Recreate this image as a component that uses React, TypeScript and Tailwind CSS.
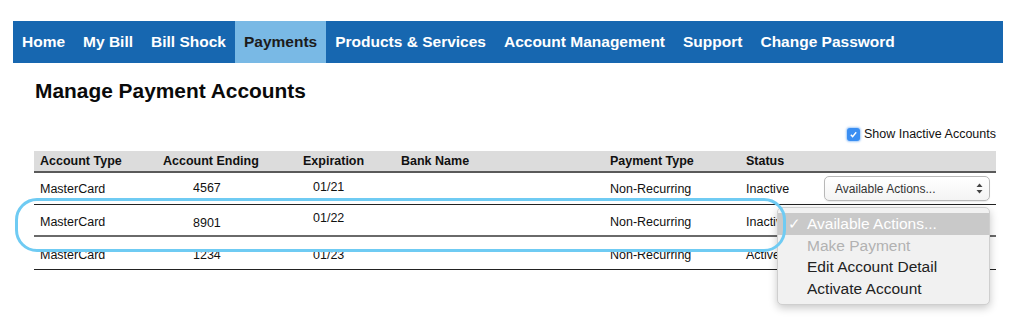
const nav = [
  "Home",
  "My Bill",
  "Bill Shock",
  "Payments",
  "Products & Services",
  "Account Management",
  "Support",
  "Change Password",
];

const cols = ["w-[123px]", "w-[140px]", "w-[98px]", "w-[209px]", "w-[136px]", "w-[78px]", "flex-1"];
const heads = ["Account Type", "Account Ending", "Expiration", "Bank Name", "Payment Type", "Status", ""];

const rows = [
  { type: "MasterCard", ending: "4567", exp: "01/21", pay: "Non-Recurring", status: "Inactive", select: true, row: "h-[32px] pt-[2px] border-b border-[#222]", endY: "-translate-y-[1px]", expY: "-translate-y-[2px]" },
  { type: "MasterCard", ending: "8901", exp: "01/22", pay: "Non-Recurring", status: "Inactive", select: false, row: "h-[32px] pt-[5px] border-b-2 border-[#6a6a6a]", endY: "translate-y-[1px]", expY: "-translate-y-[4px]" },
  { type: "MasterCard", ending: "1234", exp: "01/23", pay: "Non-Recurring", status: "Active", select: false, row: "h-[33px] pt-[4px] border-b border-[#222]", endY: "", expY: "" },
];

function SelectBox() {
  return (
    <div className="-mt-[2px] flex h-[25px] w-[166px] items-center justify-between rounded-[5px] border border-[#b8b8b8] bg-gradient-to-b from-white to-[#f4f4f4] pl-[10px] pr-[6px] shadow-[0_1px_1px_rgba(0,0,0,0.08)]">
      <span className="text-[12px] text-[#333]">Available Actions...</span>
      <svg width="7" height="11" viewBox="0 0 7 11" className="text-[#444]">
        <path d="M3.5 0.5 L6.5 4 H0.5 Z" fill="currentColor" />
        <path d="M3.5 10.5 L6.5 7 H0.5 Z" fill="currentColor" />
      </svg>
    </div>
  );
}

export default function App() {
  return (
    <div className="relative h-[336px] w-[1024px] overflow-hidden bg-white font-['Liberation_Sans',Arial,sans-serif] text-[#111]">
      <nav className="mx-[13px] mt-[21px] flex h-[42px] w-[990px] items-stretch bg-[#1767b0]">
        {nav.map((item) => (
          <span
            key={item}
            className={`flex items-center px-[9px] text-[15.5px] font-bold ${
              item === "Payments" ? "bg-[#79b9e5] text-[#1c1c1c]" : "text-white"
            }`}
          >
            {item}
          </span>
        ))}
      </nav>

      <h1 className="mt-[16px] h-[24px] pl-[35px] text-[20.9px] font-bold leading-[24px] text-[#0a0a0a]">
        Manage Payment Accounts
      </h1>

      <div className="mt-[24px] flex h-[14px] items-center justify-end pr-[28px]">
        <span className="mr-[4px] flex h-[13px] w-[13px] items-center justify-center rounded-[3px] bg-[#3a8ef2] shadow-[0_0_2px_1px_rgba(58,142,242,0.45)]">
          <svg width="9" height="9" viewBox="0 0 9 9">
            <path d="M1.8 4.8 L3.6 6.6 L7.2 2.2" stroke="white" strokeWidth="1.4" fill="none" />
          </svg>
        </span>
        <span className="text-[12.5px]">Show Inactive Accounts</span>
      </div>

      <div className="mx-[34px] mt-[10px] w-[962px]">
        <div className="flex h-[22px] items-center border-b-2 border-[#5a5a5a] bg-[#dcdcdc] text-[12.5px] font-bold">
          {heads.map((h, i) => (
            <div key={i} className={`${cols[i]} pl-[6px]`}>
              {h}
            </div>
          ))}
        </div>
        {rows.map((r) => (
          <div key={r.ending} className={`flex items-center text-[12.5px] ${r.row}`}>
            <div className={`${cols[0]} pl-[6px]`}>{r.type}</div>
            <div className={`${cols[1]} pl-[36px] ${r.endY}`}>{r.ending}</div>
            <div className={`${cols[2]} pl-[16px] ${r.expY}`}>{r.exp}</div>
            <div className={cols[3]} />
            <div className={`${cols[4]} pl-[6px]`}>{r.pay}</div>
            <div className={`${cols[5]} pl-[6px]`}>{r.status}</div>
            <div className={`${cols[6]} pl-[6px]`}>{r.select && <SelectBox />}</div>
          </div>
        ))}
      </div>

      {/* open native menu */}
      <div className="absolute left-[777px] top-[207px] w-[213px] rounded-[5px] border border-[#cfcfcf] bg-[#f1f1f1] py-[5px] text-[15.5px] shadow-[0_3px_8px_rgba(0,0,0,0.22)]">
        <div className="flex h-[21.5px] items-center bg-[#c9c9c9] text-white">
          <span className="w-[29px] pl-[10px] text-[15px]">✓</span>
          <span>Available Actions...</span>
        </div>
        <div className="flex h-[21.5px] items-center pl-[29px] text-[#b2b2b2]">Make Payment</div>
        <div className="flex h-[21.5px] items-center pl-[29px] text-[#222]">Edit Account Detail</div>
        <div className="flex h-[21.5px] items-center pl-[29px] text-[#222]">Activate Account</div>
      </div>

      {/* annotation ring */}
      <div className="pointer-events-none absolute left-[15px] top-[198px] h-[54px] w-[771px] rounded-[22px] border-[3px] border-[#6fcbf3]" />
    </div>
  );
}
